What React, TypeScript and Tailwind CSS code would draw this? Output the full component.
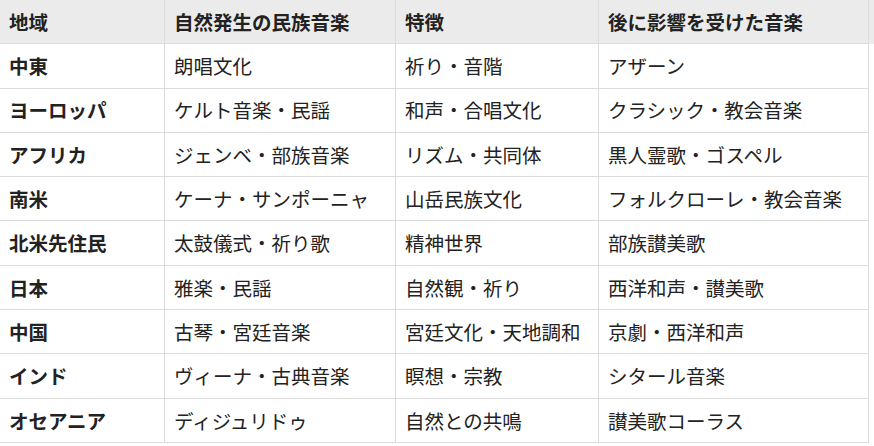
const headers = ["地域", "自然発生の民族音楽", "特徴", "後に影響を受けた音楽"];

const rows = [
  ["中東", "朗唱文化", "祈り・音階", "アザーン"],
  ["ヨーロッパ", "ケルト音楽・民謡", "和声・合唱文化", "クラシック・教会音楽"],
  ["アフリカ", "ジェンベ・部族音楽", "リズム・共同体", "黒人霊歌・ゴスペル"],
  ["南米", "ケーナ・サンポーニャ", "山岳民族文化", "フォルクローレ・教会音楽"],
  ["北米先住民", "太鼓儀式・祈り歌", "精神世界", "部族讃美歌"],
  ["日本", "雅楽・民謡", "自然観・祈り", "西洋和声・讃美歌"],
  ["中国", "古琴・宮廷音楽", "宮廷文化・天地調和", "京劇・西洋和声"],
  ["インド", "ヴィーナ・古典音楽", "瞑想・宗教", "シタール音楽"],
  ["オセアニア", "ディジュリドゥ", "自然との共鳴", "讃美歌コーラス"],
];

const cols = "grid grid-cols-[165px_231px_203px_270px]";

const App = () => {
  return (
    <div className="w-[874px] h-[446px] bg-white text-[#222] font-['Noto_Sans_CJK_JP','Noto_Sans',sans-serif] text-[19.5px] leading-none">
      <div className={`${cols} bg-[#ebebeb] font-bold`}>
        {headers.map((h) => (
          <div key={h} className="h-[44.3px] flex items-center pl-[9px] border-r border-b border-[#dcdcdc]">
            {h}
          </div>
        ))}
      </div>
      {rows.map((row) => (
        <div key={row[0]} className={cols}>
          {row.map((cell, i) => (
            <div
              key={i}
              className={`h-[44.3px] flex items-center pl-[9px] border-r border-b border-[#dcdcdc] ${i === 0 ? "font-bold" : ""}`}
            >
              {cell}
            </div>
          ))}
        </div>
      ))}
    </div>
  );
};

export default App;
